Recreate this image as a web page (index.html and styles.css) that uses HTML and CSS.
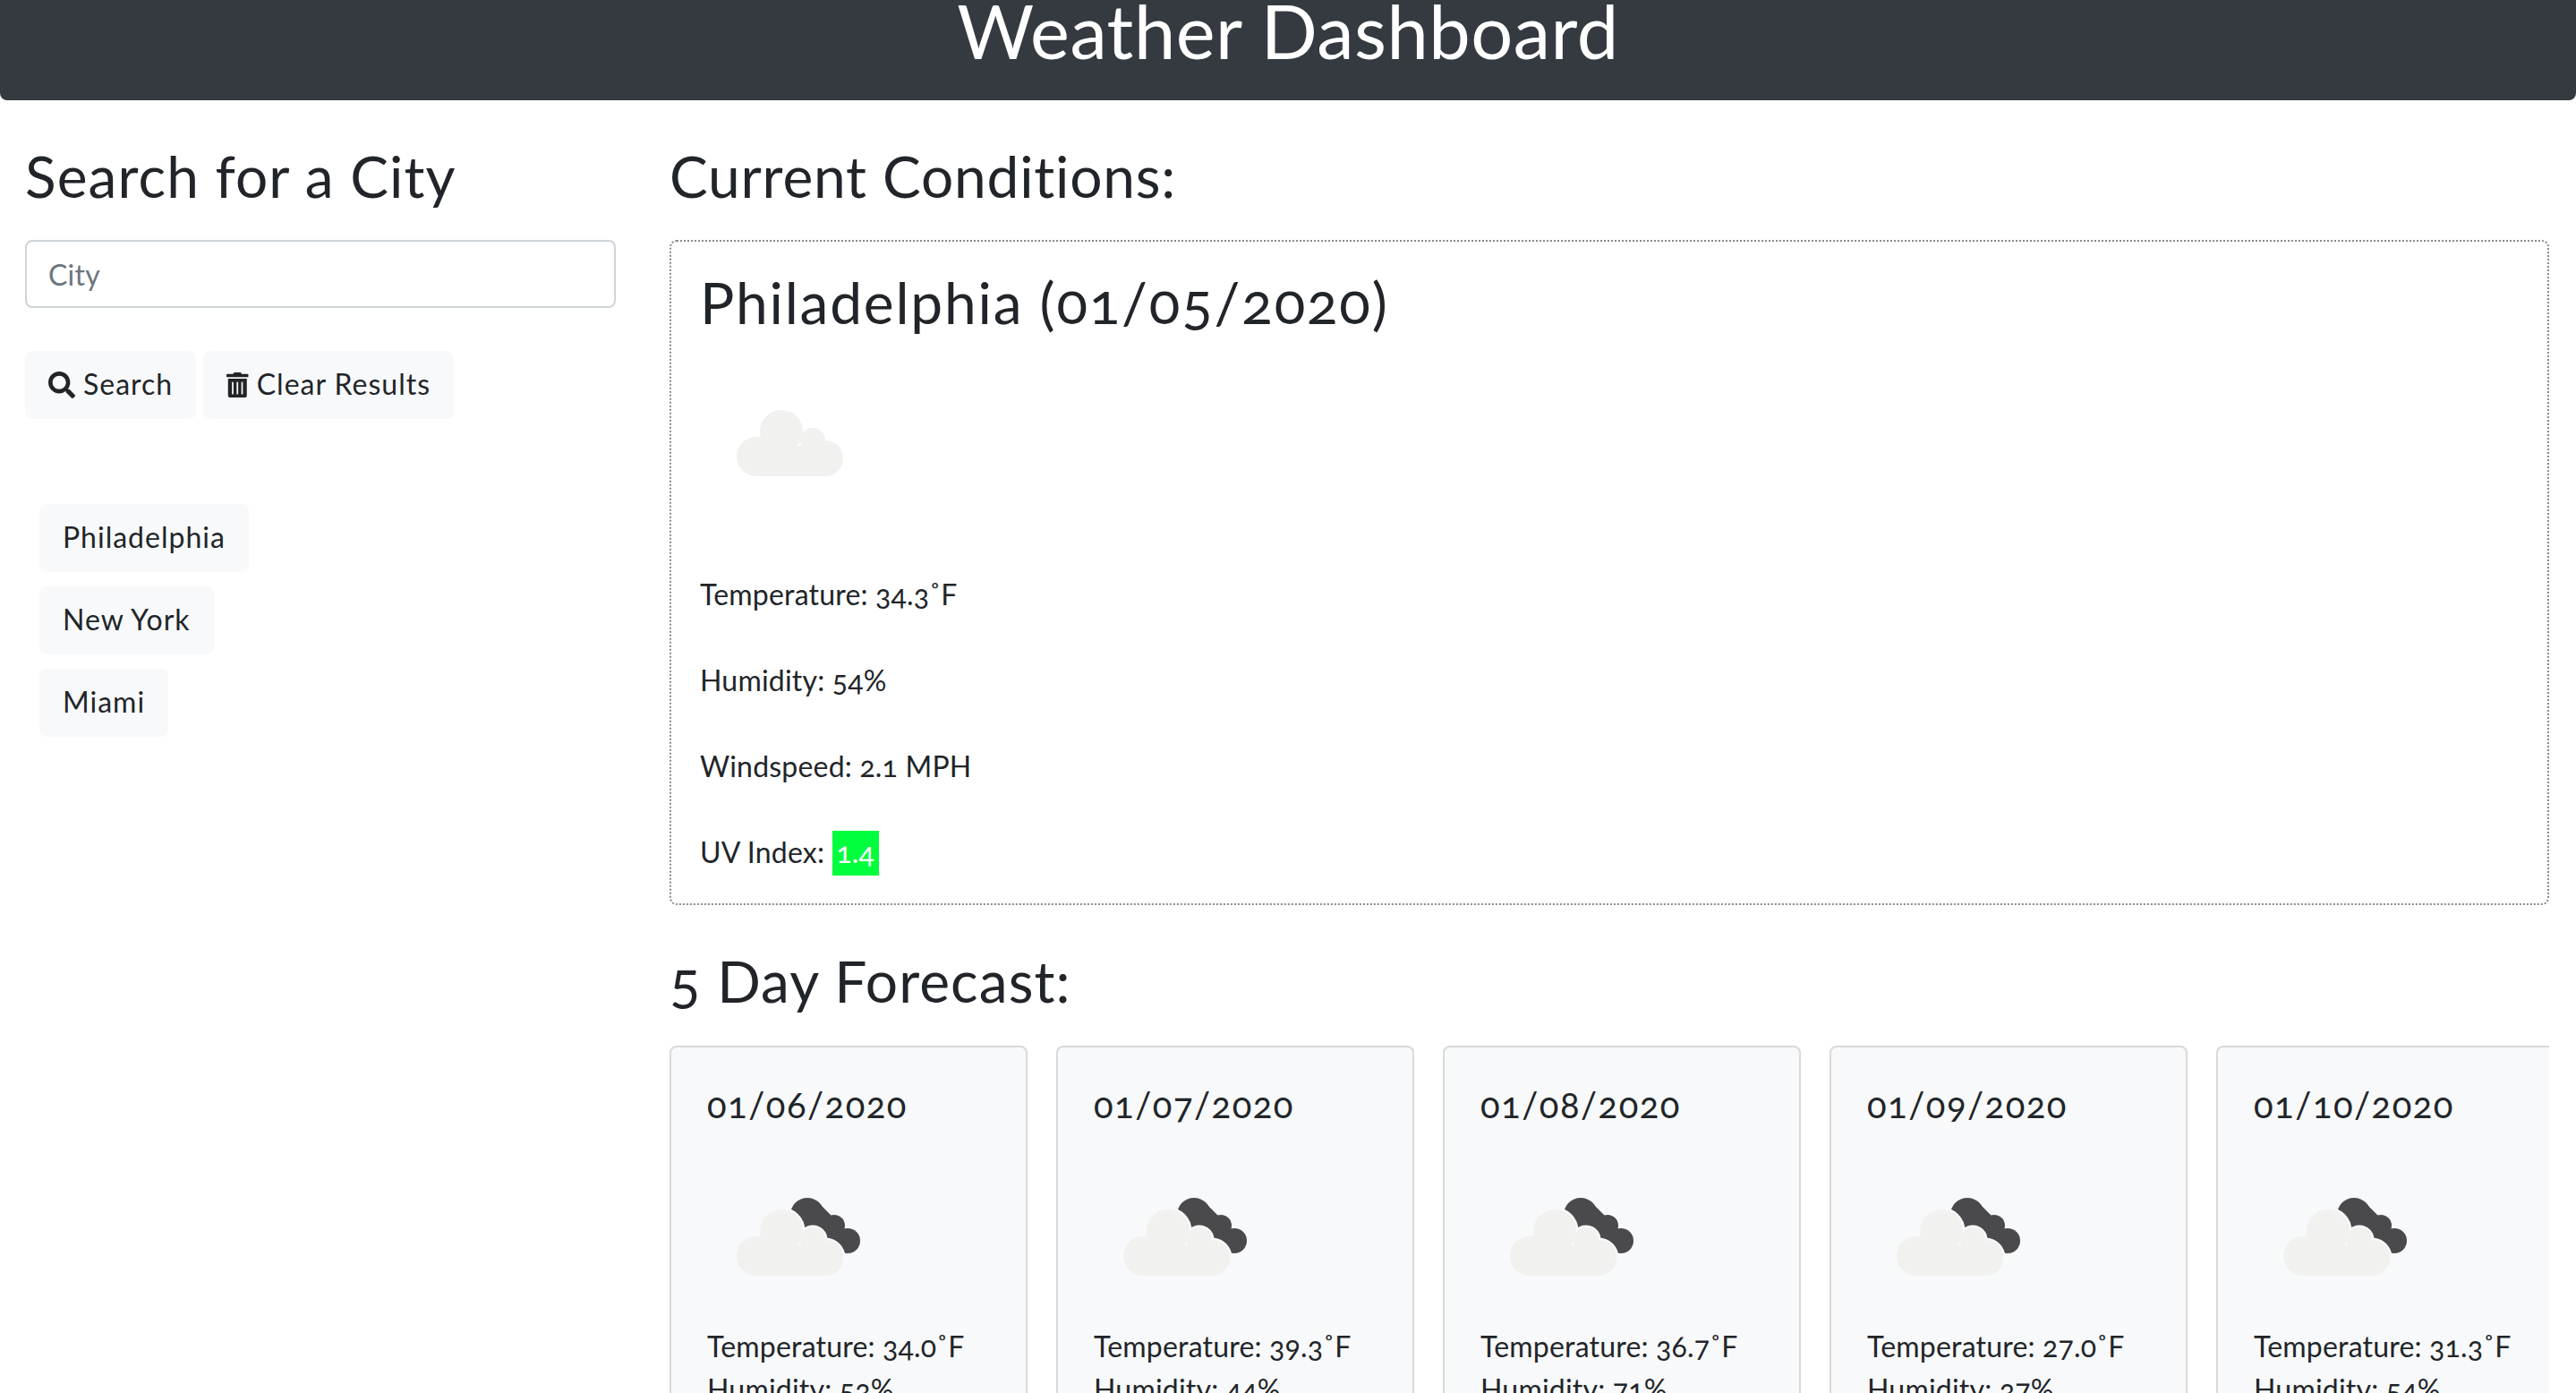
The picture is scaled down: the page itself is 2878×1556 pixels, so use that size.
FILE: index.html
```html
<!DOCTYPE html>
<html>
<head>
    <meta charset="utf-8" />
    <title>Weather Dashboard</title>
    <link rel="stylesheet" href="styles.css">
</head>
<body>
    <svg class="defs" width="0" height="0">
        <defs>
            <g id="cloud">
                <circle cx="50" cy="24" r="24" />
                <circle cx="85" cy="34" r="14" />
                <circle cx="22" cy="52" r="22" />
                <circle cx="99" cy="54" r="20" />
                <path d="M22 30H50V40H99V74H22Z" />
            </g>
            <g id="darkcloud">
                <circle cx="82" cy="23" r="19" />
                <circle cx="112" cy="35" r="12" />
                <circle cx="127" cy="52" r="14" />
                <path d="M70 20L95 10L130 45L120 66L80 50Z" />
            </g>
        </defs>
    </svg>

    <header class="top_bar">
        <h1>Weather Dashboard</h1>
    </header>

    <div class="layout">
        <aside class="side">
            <h2>Search for a City</h2>
            <input class="city_input" type="text" placeholder="City">
            <div class="actions">
                <button class="btn">
                    <svg class="icon search_icon" viewBox="0 0 512 512"><path d="M505 442.7L405.3 343c-4.5-4.5-10.6-7-17-7H372c27.6-35.3 44-79.7 44-128C416 93.1 322.9 0 208 0S0 93.1 0 208s93.1 208 208 208c48.3 0 92.7-16.4 128-44v16.3c0 6.4 2.5 12.5 7 17l99.7 99.7c9.4 9.4 24.6 9.4 33.9 0l28.3-28.3c9.4-9.4 9.4-24.6.1-34zM208 336c-70.7 0-128-57.2-128-128 0-70.7 57.2-128 128-128 70.7 0 128 57.2 128 128 0 70.7-57.2 128-128 128z"/></svg>
                    Search
                </button>
                <button class="btn">
                    <svg class="icon" viewBox="0 0 448 512"><path d="M32 464a48 48 0 0 0 48 48h288a48 48 0 0 0 48-48V128H32zm272-256a16 16 0 0 1 32 0v224a16 16 0 0 1-32 0zm-96 0a16 16 0 0 1 32 0v224a16 16 0 0 1-32 0zm-96 0a16 16 0 0 1 32 0v224a16 16 0 0 1-32 0zM432 32H312l-9.4-18.7A24 24 0 0 0 281.1 0H166.8a23.72 23.72 0 0 0-21.4 13.3L136 32H16A16 16 0 0 0 0 48v32a16 16 0 0 0 16 16h416a16 16 0 0 0 16-16V48a16 16 0 0 0-16-16z"/></svg>
                    Clear Results
                </button>
            </div>
            <div class="history">
                <button class="btn">Philadelphia</button>
                <button class="btn">New York</button>
                <button class="btn">Miami</button>
            </div>
        </aside>

        <main class="content">
            <h2>Current Conditions:</h2>
            <section class="current">
                <h2>Philadelphia (01/05/2020)</h2>
                <svg class="weather_icon" viewBox="0 0 200 200"><use href="#cloud" class="light" x="41" y="66" /></svg>
                <p>Temperature: 34.3˚F</p>
                <p>Humidity: 54%</p>
                <p>Windspeed: 2.1 MPH</p>
                <p>UV Index: <span class="uv">1.4</span></p>
            </section>

            <h2 class="forecast_title">5 Day Forecast:</h2>
            <div class="forecast">
                <article class="card">
                    <h5>01/06/2020</h5>
                    <svg class="weather_icon" viewBox="0 0 200 200">
                        <use href="#darkcloud" class="dark" x="30" y="60" />
                        <use href="#cloud" class="halo" x="33" y="77" />
                        <use href="#cloud" class="light" x="33" y="77" />
                    </svg>
                    <p>Temperature: 34.0˚F</p>
                    <p>Humidity: 53%</p>
                </article>
                <article class="card">
                    <h5>01/07/2020</h5>
                    <svg class="weather_icon" viewBox="0 0 200 200">
                        <use href="#darkcloud" class="dark" x="30" y="60" />
                        <use href="#cloud" class="halo" x="33" y="77" />
                        <use href="#cloud" class="light" x="33" y="77" />
                    </svg>
                    <p>Temperature: 39.3˚F</p>
                    <p>Humidity: 44%</p>
                </article>
                <article class="card">
                    <h5>01/08/2020</h5>
                    <svg class="weather_icon" viewBox="0 0 200 200">
                        <use href="#darkcloud" class="dark" x="30" y="60" />
                        <use href="#cloud" class="halo" x="33" y="77" />
                        <use href="#cloud" class="light" x="33" y="77" />
                    </svg>
                    <p>Temperature: 36.7˚F</p>
                    <p>Humidity: 71%</p>
                </article>
                <article class="card">
                    <h5>01/09/2020</h5>
                    <svg class="weather_icon" viewBox="0 0 200 200">
                        <use href="#darkcloud" class="dark" x="30" y="60" />
                        <use href="#cloud" class="halo" x="33" y="77" />
                        <use href="#cloud" class="light" x="33" y="77" />
                    </svg>
                    <p>Temperature: 27.0˚F</p>
                    <p>Humidity: 37%</p>
                </article>
                <article class="card">
                    <h5>01/10/2020</h5>
                    <svg class="weather_icon" viewBox="0 0 200 200">
                        <use href="#darkcloud" class="dark" x="30" y="60" />
                        <use href="#cloud" class="halo" x="33" y="77" />
                        <use href="#cloud" class="light" x="33" y="77" />
                    </svg>
                    <p>Temperature: 31.3˚F</p>
                    <p>Humidity: 54%</p>
                </article>
            </div>
        </main>
    </div>
</body>
</html>
```

FILE: styles.css
```css
html, body {
    height: 100%;
    overflow: hidden;
}

body {
    margin: 0;
    background-color: white;
    color: #212529;
    font-family: Lato, sans-serif;
    font-variant-numeric: oldstyle-nums;
    font-size: 32px;
    line-height: 48px;
    letter-spacing: 0.2px;
}

.defs {
    display: block;
}

h1, h2, h5, p {
    margin: 0;
    font-weight: 400;
}

h2 {
    font-size: 64px;
    line-height: 77px;
    letter-spacing: 0.8px;
}

.top_bar {
    height: 112px;
    overflow: hidden;
    background-color: #343a40;
    border-radius: 0 0 8px 8px;
    color: white;
    text-align: center;
}

.top_bar h1 {
    font-size: 83px;
    line-height: 68px;
    letter-spacing: 0.5px;
}

.layout {
    display: flex;
    padding: 0 30px 0 28px;
}

.side {
    width: 660px;
    flex: none;
    padding-top: 46px;
}

.side h2 {
    letter-spacing: 1.1px;
}

.city_input {
    display: block;
    box-sizing: border-box;
    width: 660px;
    height: 76px;
    margin-top: 33px;
    padding: 0 24px;
    border: 2px solid #ced4da;
    border-radius: 8px;
    font: inherit;
    letter-spacing: inherit;
    color: #495057;
}

.city_input::placeholder {
    color: #6c757d;
}

.actions {
    display: flex;
    gap: 8px;
    margin-top: 48px;
}

.btn {
    display: flex;
    align-items: center;
    height: 76px;
    padding: 0 26px 3px;
    border: 0;
    border-radius: 8px;
    background-color: #f8f9fa;
    color: #212529;
    font: inherit;
    letter-spacing: 1px;
}

.icon {
    height: 28px;
    margin-top: 3px;
    margin-right: 9px;
    fill: #212529;
}

.search_icon {
    height: 30px;
}

.history {
    display: flex;
    flex-direction: column;
    align-items: flex-start;
    gap: 16px;
    margin-top: 95px;
    padding-left: 16px;
}

.content {
    flex: 1;
    min-width: 0;
    margin-left: 60px;
    padding-top: 46px;
}

.current {
    box-sizing: border-box;
    margin-top: 33px;
    padding: 29px 32px 31px;
    border: 2px dotted #8a8a8a;
    border-radius: 8px;
}

.current h2 {
    margin-bottom: 16px;
    letter-spacing: 1.8px;
}

.weather_icon {
    display: block;
    width: 200px;
    height: 200px;
}

.current .weather_icon {
    margin-bottom: 48px;
}

.card .weather_icon {
    margin-top: 16px;
    margin-bottom: 6px;
}

.light {
    fill: #f1f1ef;
}

.dark {
    fill: #4a4a4c;
}

.halo {
    fill: #f8f9fa;
    stroke: #f8f9fa;
    stroke-width: 5px;
}

.current p {
    margin-bottom: 48px;
}

.current p:last-child {
    margin-bottom: 0;
}

.uv {
    display: inline-block;
    height: 50px;
    padding: 0 5px;
    background-color: #00ff3c;
    color: white;
    letter-spacing: 0;
}

.forecast_title {
    margin-top: 46px;
    letter-spacing: 1.1px;
}

.forecast {
    display: flex;
    gap: 32px;
    margin-top: 34px;
    overflow: hidden;
}

.card {
    box-sizing: border-box;
    flex: none;
    width: 400px;
    height: 600px;
    padding: 40px;
    border: 2px solid rgba(0, 0, 0, 0.125);
    border-radius: 8px;
    background-color: #f8f9fa;
}

.card h5 {
    font-size: 40px;
    line-height: 48px;
    letter-spacing: 1.5px;
}
```
